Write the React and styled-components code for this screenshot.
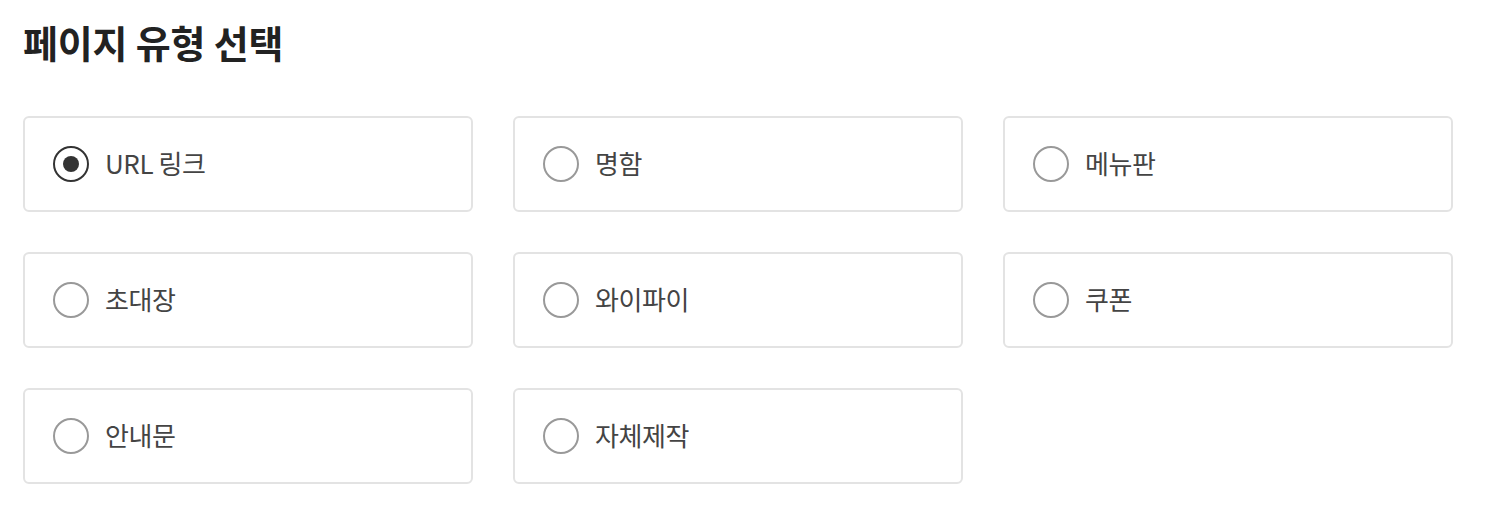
import React, { useState } from "react";
import styled, { createGlobalStyle } from "styled-components";

const GlobalStyle = createGlobalStyle`
  body {
    margin: 0;
    background: #fff;
    font-family: "Noto Sans CJK KR", "Noto Sans", sans-serif;
  }
`;

const Page = styled.div`
  padding: 18px 23px 0;
`;

const Title = styled.h1`
  margin: 0 0 50px;
  font-size: 38px;
  font-weight: 700;
  line-height: 48px;
  color: #222;
  letter-spacing: -0.2px;
`;

const Grid = styled.div`
  display: grid;
  grid-template-columns: repeat(3, 450px);
  grid-auto-rows: 96px;
  gap: 40px;
`;

const Card = styled.label`
  display: flex;
  align-items: center;
  gap: 16px;
  padding: 0 28px;
  border: 2px solid #e3e3e3;
  border-radius: 6px;
  box-sizing: border-box;
  cursor: pointer;
`;

const Radio = styled.span`
  width: 36px;
  height: 36px;
  box-sizing: border-box;
  border-radius: 50%;
  border: 2px solid ${(p) => (p.$checked ? "#333" : "#999")};
  display: flex;
  align-items: center;
  justify-content: center;
  flex-shrink: 0;

  &::after {
    content: "";
    width: 16px;
    height: 16px;
    border-radius: 50%;
    background: #333;
    display: ${(p) => (p.$checked ? "block" : "none")};
  }
`;

const Label = styled.span`
  font-size: 26px;
  line-height: 34px;
  margin-top: -2px;
  color: #444;
  letter-spacing: -0.4px;
`;

const types = ["URL 링크", "명함", "메뉴판", "초대장", "와이파이", "쿠폰", "안내문", "자체제작"];

const App = () => {
  const [selected, setSelected] = useState(0);
  return (
    <Page>
      <GlobalStyle />
      <Title>페이지 유형 선택</Title>
      <Grid>
        {types.map((t, i) => (
          <Card key={t} onClick={() => setSelected(i)}>
            <Radio $checked={selected === i} />
            <Label>{t}</Label>
          </Card>
        ))}
      </Grid>
    </Page>
  );
};

export default App;
